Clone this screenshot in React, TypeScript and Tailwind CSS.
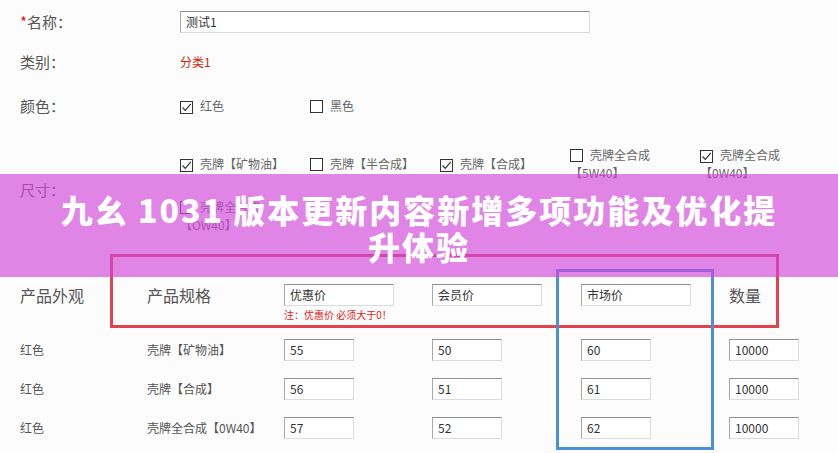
import React from "react";

const FONT = "font-['Microsoft_YaHei','Noto_Sans_CJK_SC',sans-serif]";

function Box({ checked }: { checked?: boolean }) {
  return (
    <span className="inline-flex w-[13px] h-[13px] shrink-0 items-center justify-center border border-[#333] bg-white align-[-2px]">
      {checked && (
        <svg width="11" height="11" viewBox="0 0 11 11">
          <path d="M1.5 5.5 L4.3 8.3 L9.8 1.8" stroke="#333" strokeWidth="1.2" fill="none" />
        </svg>
      )}
    </span>
  );
}

function Field({ value, w }: { value: string; w: string }) {
  return (
    <div
      className={`${w} h-[22px] bg-white border border-t-[#8f8f8f] border-l-[#a8a8a8] border-r-[#dcdcdc] border-b-[#dcdcdc] pl-[5px] text-[12px] leading-[20px] text-[#333]`}
    >
      {value}
    </div>
  );
}

function Opt({ checked, label }: { checked?: boolean; label: string }) {
  return (
    <div className="w-[130px] pr-[10px] text-[12px] leading-[18px] text-[#666]">
      <Box checked={checked} />
      <span className="ml-[7px]">{label}</span>
    </div>
  );
}

const rows = [
  { color: "红色", spec: "壳牌【矿物油】", a: "55", b: "50", c: "60", d: "10000" },
  { color: "红色", spec: "壳牌【合成】", a: "56", b: "51", c: "61", d: "10000" },
  { color: "红色", spec: "壳牌全合成【0W40】", a: "57", b: "52", c: "62", d: "10000" },
];

export default function App() {
  return (
    <div className={`relative w-[838px] h-[453px] overflow-hidden bg-[#fcfcfc] ${FONT}`}>
      <div className="pl-5 pt-[11px]">
        {/* name */}
        <div className="flex h-[22px] items-center">
          <div className="w-[160px] text-[15px] text-[#555]">
            <span className="text-[#e02020]">*</span>名称：
          </div>
          <Field value="测试1" w="w-[410px]" />
        </div>

        {/* category */}
        <div className="mt-[18px] flex h-[22px] items-center">
          <div className="w-[160px] text-[15px] text-[#555]">类别：</div>
          <div className="text-[12px] text-[#d81e06]">分类1</div>
        </div>

        {/* color */}
        <div className="mt-[22px] flex h-[22px] items-center">
          <div className="w-[160px] text-[15px] text-[#555]">颜色：</div>
          <Opt checked label="红色" />
          <Opt label="黑色" />
        </div>

        {/* size */}
        <div className="mt-[29px] flex items-center">
          <div className="w-[160px] text-[15px] text-[#555]">尺寸：</div>
          <div className="flex flex-col gap-[16px]">
            <div className="flex items-center">
              <Opt checked label="壳牌【矿物油】" />
              <Opt label="壳牌【半合成】" />
              <Opt checked label="壳牌【合成】" />
              <Opt label="壳牌全合成【5W40】" />
              <Opt checked label="壳牌全合成【0W40】" />
            </div>
            <div className="flex items-center">
              <Opt label="壳牌全合成【OW40】" />
            </div>
          </div>
        </div>

        {/* table header */}
        <div className="mt-[50px] grid grid-cols-[127px_137px_148px_149px_148px_1fr] items-start">
          <div className="h-[22px] text-[16px] leading-[22px] text-[#555]">产品外观</div>
          <div className="h-[22px] text-[16px] leading-[22px] text-[#555]">产品规格</div>
          <div>
            <Field value="优惠价" w="w-[110px]" />
            <div className="mt-[2px] text-[10px] leading-[14px] text-[#e02020]">注：优惠价 必须大于0！</div>
          </div>
          <Field value="会员价" w="w-[110px]" />
          <Field value="市场价" w="w-[110px]" />
          <div className="h-[22px] text-[16px] leading-[22px] text-[#555]">数量</div>
        </div>

        {/* table rows */}
        <div className="mt-[17px] flex flex-col gap-[17px]">
          {rows.map((r, i) => (
            <div key={i} className="grid grid-cols-[127px_137px_148px_149px_148px_1fr] items-center text-[12px] text-[#555]">
              <div>{r.color}</div>
              <div>{r.spec}</div>
              <Field value={r.a} w="w-[70px]" />
              <Field value={r.b} w="w-[70px]" />
              <Field value={r.c} w="w-[70px]" />
              <Field value={r.d} w="w-[70px]" />
            </div>
          ))}
        </div>
      </div>

      {/* annotation frames */}
      <div className="absolute left-[110px] top-[254px] w-[669px] h-[74px] border-[3px] border-[#e0444c]" />
      <div className="absolute left-[556px] top-[269px] w-[158px] h-[181px] border-[3px] border-[#4a90d9]" />

      {/* banner */}
      <div className="absolute left-0 right-0 top-[174px] h-[103px] bg-[rgba(210,70,218,0.66)] flex items-center justify-center pt-[4px]">
        <div className="max-w-[745px] text-center text-[32px] font-black leading-[37px] tracking-[2px] text-white">
          九幺 1031 版本更新内容新增多项功能及优化提升体验
        </div>
      </div>
    </div>
  );
}
